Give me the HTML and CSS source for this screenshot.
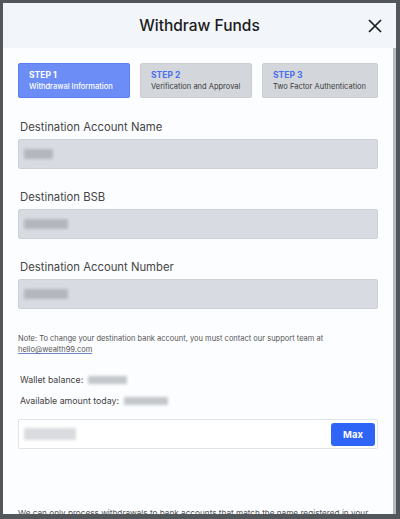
FILE: index.html
```html
<!DOCTYPE html>
<html lang="en">
<head>
<meta charset="utf-8">
<title>Withdraw Funds</title>
<link rel="stylesheet" href="styles.css">
</head>
<body>
<div class="backdrop">
  <div class="modal">
    <header class="modal-header">
      <span></span>
      <h1 class="title">Withdraw Funds</h1>
      <button class="close" aria-label="Close">
        <svg width="14" height="14" viewBox="0 0 14 14"><path d="M1 1 L13 13 M13 1 L1 13" stroke="#1c1c1c" stroke-width="1.7" fill="none"/></svg>
      </button>
    </header>
    <div class="modal-main">
      <div class="modal-body">
        <div class="steps">
          <div class="step active">
            <div class="step-num">STEP 1</div>
            <div class="step-sub">Withdrawal Information</div>
          </div>
          <div class="step">
            <div class="step-num">STEP 2</div>
            <div class="step-sub">Verification and Approval</div>
          </div>
          <div class="step">
            <div class="step-num">STEP 3</div>
            <div class="step-sub">Two Factor Authentication</div>
          </div>
        </div>

        <div class="field">
          <label class="label">Destination Account Name</label>
          <div class="input readonly"><span class="blur w30"></span></div>
        </div>
        <div class="field">
          <label class="label">Destination BSB</label>
          <div class="input readonly"><span class="blur w44"></span></div>
        </div>
        <div class="field">
          <label class="label">Destination Account Number</label>
          <div class="input readonly"><span class="blur w44"></span></div>
        </div>

        <p class="note">Note: To change your destination bank account, you must contact our support team at <a href="#" class="link">hello@wealth99.com</a></p>

        <div class="info">
          <div class="info-row">Wallet balance: <span class="blur small w40"></span></div>
          <div class="info-row">Available amount today: <span class="blur small w44"></span></div>
        </div>

        <div class="amount">
          <span class="blur light w52"></span>
          <button class="max">Max</button>
        </div>

        <p class="footer-text">We can only process withdrawals to bank accounts that match the name registered in your</p>
      </div>
      <div class="scrollbar"></div>
    </div>
  </div>
</div>
</body>
</html>
```

FILE: styles.css
```css
* { box-sizing: border-box; }
html, body { margin: 0; padding: 0; }
body {
  width: 400px;
  height: 519px;
  overflow: hidden;
  background: #52575c;
  font-family: Inter, "Noto Sans", "Liberation Sans", sans-serif;
}
.backdrop {
  padding: 3px 4px 0 3px;
  height: 100%;
}
.modal {
  width: 393px;
  height: 511px;
  display: flex;
  flex-direction: column;
  background: #fcfdff;
  overflow: hidden;
}
.modal-header {
  height: 45px;
  flex: none;
  background: #f2f5fa;
  display: grid;
  grid-template-columns: 1fr auto 1fr;
  align-items: center;
}
.title {
  margin: 0;
  font-size: 15.5px;
  font-weight: 500;
  color: #1b1b1b;
}
.close {
  justify-self: end;
  margin-right: 14px;
  border: 0;
  background: none;
  padding: 0;
  width: 14px;
  height: 14px;
  display: flex;
}
.modal-main {
  flex: 1;
  display: flex;
  min-height: 0;
}
.modal-body {
  flex: 1;
  padding: 15px 15px 0 15px;
  overflow: hidden;
}
.scrollbar {
  width: 3px;
  background: #b6b9bd;
  flex: none;
}
.steps {
  display: grid;
  grid-template-columns: 112px 112px 1fr;
  gap: 10px;
}
.step {
  height: 35px;
  border-radius: 2px;
  background: #d3d6db;
  border: 1px solid #c9ccd1;
  padding: 5px 0 0 10px;
}
.step.active {
  background: #6c8df6;
  border-color: #5b7ef2;
}
.step-num {
  font-size: 8.5px;
  font-weight: 700;
  color: #4a6ef0;
  line-height: 12px;
}
.step-sub {
  font-size: 7.5px;
  color: #3a3a3a;
  line-height: 11px;
}
.step.active .step-num,
.step.active .step-sub { color: #ffffff; }
.step.active .step-sub { font-weight: 500; }

.field {
  margin-top: 21px;
  display: flex;
  flex-direction: column;
  gap: 4px;
}
.field + .field { margin-top: 20px; }
.label {
  font-size: 11.3px;
  line-height: 16px;
  color: #454545;
  padding-left: 2px;
}
.input {
  height: 30px;
  border: 1px solid #cdd1d7;
  border-radius: 2px;
  display: flex;
  align-items: center;
  padding-left: 5px;
}
.input.readonly { background: #d8dce2; }
.blur {
  display: inline-block;
  height: 10px;
  background: #b3b7bd;
  filter: blur(1.8px);
  border-radius: 1px;
}
.blur.small { height: 8px; background: #c3c6ca; }
.blur.light { height: 12px; background: #d9dbde; }
.w30 { width: 29px; }
.w40 { width: 39px; }
.w44 { width: 44px; }
.w52 { width: 52px; }

.note {
  margin: 24px 0 0 0;
  font-size: 7.5px;
  line-height: 11px;
  color: #555;
}
.link {
  color: #555;
  text-decoration: underline;
  text-decoration-color: #6f87c9;
}
.info {
  margin-top: 14px;
  padding-left: 2px;
}
.info-row {
  height: 21px;
  display: flex;
  align-items: center;
  gap: 5px;
  font-size: 8.8px;
  color: #444;
}
.amount {
  margin-top: 8px;
  height: 30px;
  background: #ffffff;
  border: 1px solid #e1e4e8;
  border-radius: 2px;
  display: flex;
  align-items: center;
  justify-content: space-between;
  padding: 0 2px 0 5px;
}
.max {
  width: 44px;
  height: 23px;
  border: 0;
  border-radius: 3px;
  background: #2f65f6;
  color: #fff;
  font-family: inherit;
  font-size: 9.5px;
  font-weight: 700;
  padding: 0;
}
.footer-text {
  margin: 58px 0 0 0;
  font-size: 8.2px;
  line-height: 12px;
  color: #555;
}
```
